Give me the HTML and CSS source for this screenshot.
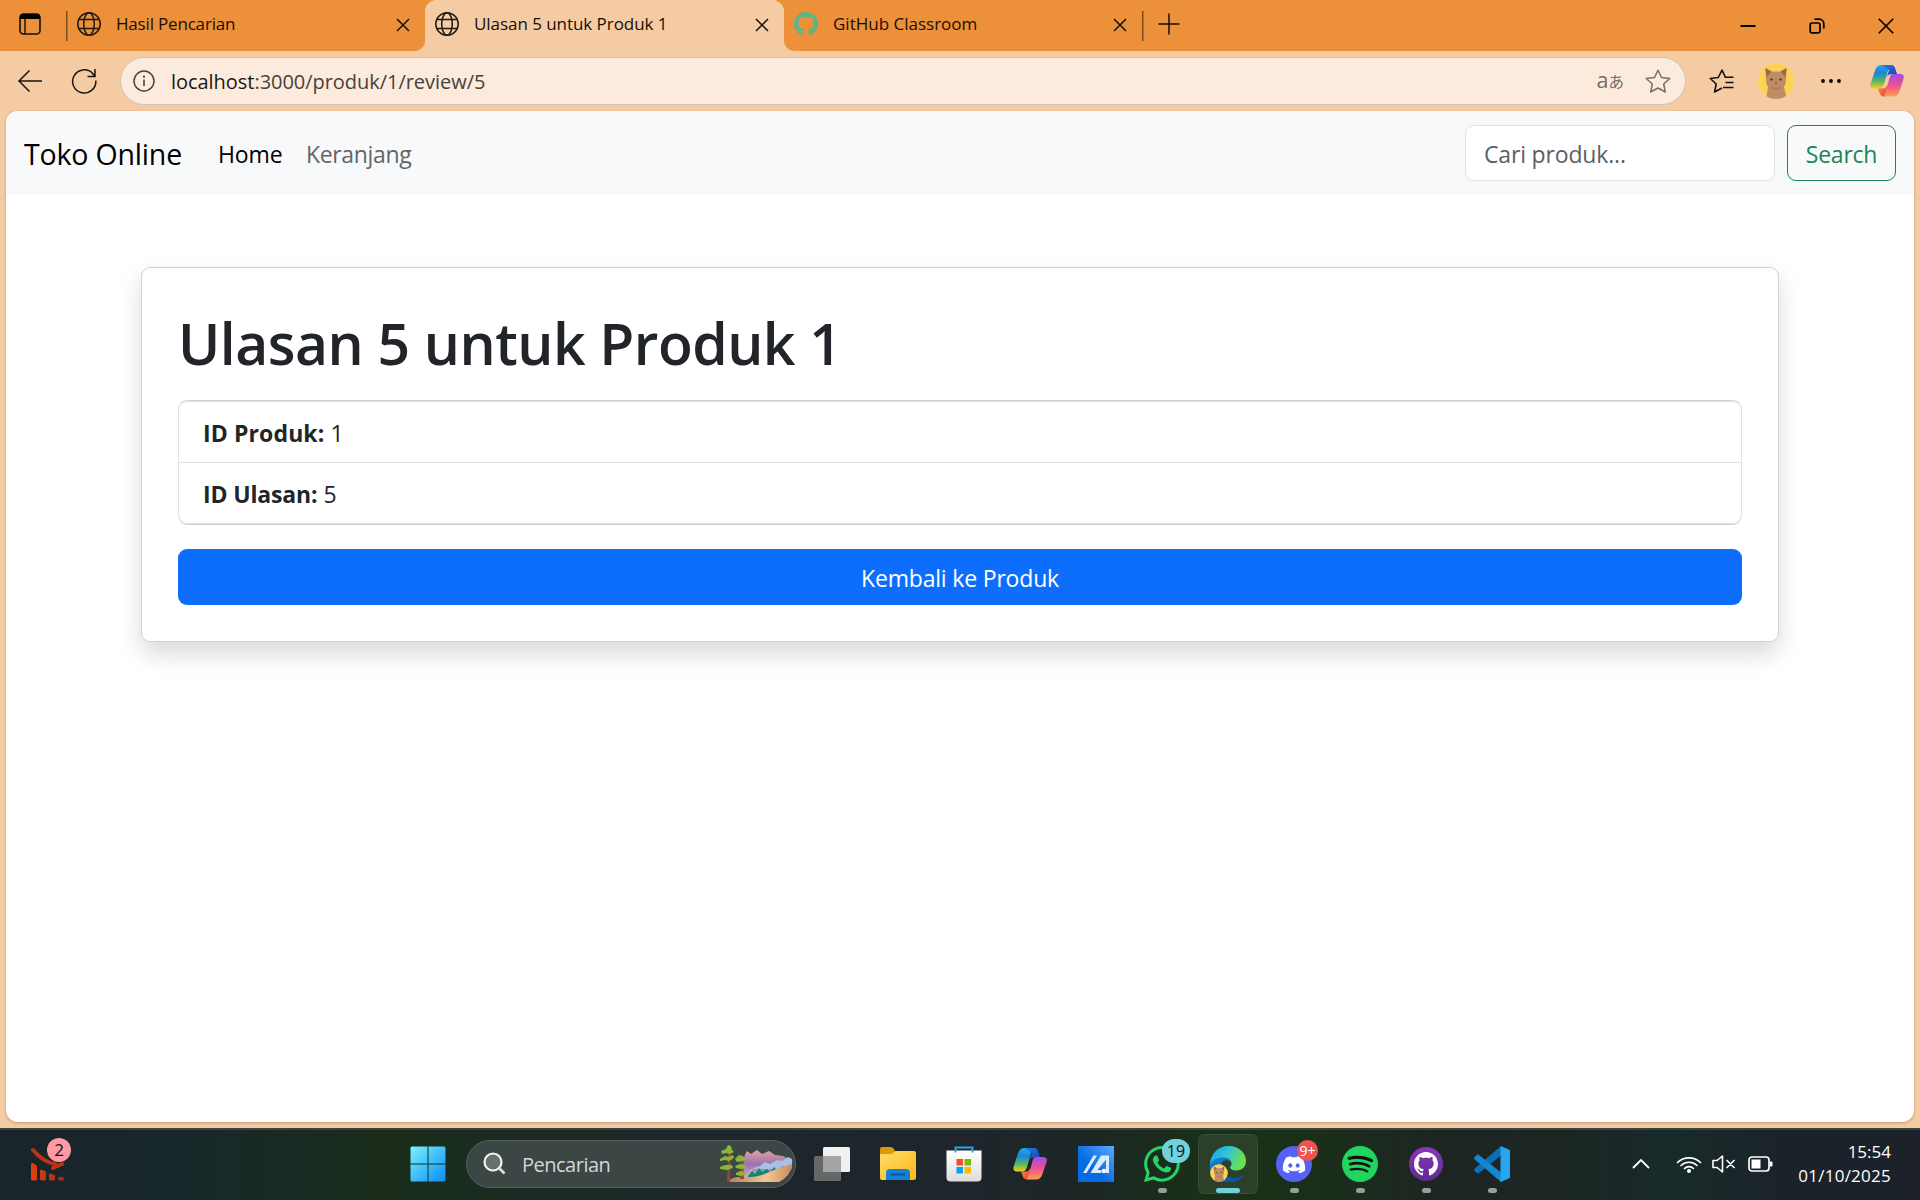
FILE: index.html
```
<!DOCTYPE html>
<html lang="id">
<head>
<meta charset="utf-8">
<title>Ulasan 5 untuk Produk 1</title>
<link rel="stylesheet" href="styles.css">
</head>
<body>
<svg class="defs" width="0" height="0" aria-hidden="true">
  <defs>
    <linearGradient id="cpA" x1="0" y1="0" x2="0" y2="1"><stop offset="0" stop-color="#1ba8f0"/><stop offset=".35" stop-color="#1b86d8"/><stop offset=".7" stop-color="#5cb860"/><stop offset="1" stop-color="#f5d014"/></linearGradient>
    <linearGradient id="cpB" x1="0" y1="0" x2="0" y2="1"><stop offset="0" stop-color="#a24bea"/><stop offset=".5" stop-color="#ee5090"/><stop offset="1" stop-color="#ff9f4e"/></linearGradient>
    <linearGradient id="cpC" x1="0" y1="0" x2="1" y2="1"><stop offset="0" stop-color="#1b7fe6"/><stop offset="1" stop-color="#1c3bb8"/></linearGradient>
    <linearGradient id="cpD" x1="0" y1="0" x2="1" y2="1"><stop offset="0" stop-color="#ff8a4a"/><stop offset="1" stop-color="#e8403a"/></linearGradient>
    <linearGradient id="winG" gradientUnits="userSpaceOnUse" x1="0" y1="0" x2="36" y2="36"><stop offset="0" stop-color="#7af3ff"/><stop offset=".5" stop-color="#3fc0fb"/><stop offset="1" stop-color="#0b8cf5"/></linearGradient>
    <linearGradient id="folder" x1="0" y1="0" x2="1" y2="1"><stop offset="0" stop-color="#ffdc6e"/><stop offset="1" stop-color="#fdb714"/></linearGradient>
    <linearGradient id="storeG" x1="0" y1="0" x2="0" y2="1"><stop offset="0" stop-color="#fff"/><stop offset="1" stop-color="#dcdcdc"/></linearGradient>
    <linearGradient id="asus" x1="1" y1="0" x2=".4" y2=".6"><stop offset="0" stop-color="#5fa8ff"/><stop offset="1" stop-color="#056be0"/></linearGradient>
    <linearGradient id="edgeA" x1="0" y1="0" x2="1" y2=".3"><stop offset="0" stop-color="#1b9de2"/><stop offset=".5" stop-color="#2fc4d8"/><stop offset="1" stop-color="#6be04e"/></linearGradient>
    <linearGradient id="edgeB" x1="0" y1="0" x2="1" y2="1"><stop offset="0" stop-color="#1487d8"/><stop offset="1" stop-color="#0b4a94"/></linearGradient>
    <linearGradient id="ghG" x1="0" y1="0" x2="0" y2="1"><stop offset="0" stop-color="#8b36b8"/><stop offset="1" stop-color="#5e2a90"/></linearGradient>
    <linearGradient id="redG" x1="0" y1="0" x2="1" y2="0"><stop offset="0" stop-color="#df410d"/><stop offset="1" stop-color="#a02a14"/></linearGradient>
    <linearGradient id="mtn" x1="0" y1="0" x2="0" y2="1"><stop offset="0" stop-color="#e2a5a0"/><stop offset=".5" stop-color="#9a72b0"/><stop offset="1" stop-color="#d9a8b8"/></linearGradient>
    <linearGradient id="sand" x1="0" y1="0" x2="1" y2="0"><stop offset="0" stop-color="#b87858"/><stop offset=".6" stop-color="#f0c896"/><stop offset="1" stop-color="#c88a60"/></linearGradient>
    <symbol id="globe" viewBox="0 0 24 24"><g fill="none" stroke="#201a14" stroke-width="1.5"><circle cx="12" cy="12" r="11.2"/><ellipse cx="12" cy="12" rx="5.3" ry="11.2"/><path d="M2 7.6h20M2 16.4h20"/></g></symbol>
    <symbol id="x" viewBox="0 0 14 14"><path d="M1 1l12 12M13 1L1 13" stroke="#111" stroke-width="1.5" fill="none"/></symbol>
    <symbol id="octocat" viewBox="0 0 16 16"><path d="M8 0C3.58 0 0 3.58 0 8c0 3.54 2.29 6.53 5.47 7.59.4.07.55-.17.55-.38 0-.19-.01-.82-.01-1.49-2.01.37-2.53-.49-2.69-.94-.09-.23-.48-.94-.82-1.13-.28-.15-.68-.52-.01-.53.63-.01 1.08.58 1.23.82.72 1.21 1.87.87 2.33.66.07-.52.28-.87.51-1.07-1.78-.2-3.64-.89-3.64-3.95 0-.87.31-1.59.82-2.15-.08-.2-.36-1.02.08-2.12 0 0 .67-.21 2.2.82.64-.18 1.32-.27 2-.27s1.36.09 2 .27c1.53-1.04 2.2-.82 2.2-.82.44 1.1.16 1.92.08 2.12.51.56.82 1.27.82 2.15 0 3.07-1.87 3.75-3.65 3.95.29.25.54.73.54 1.48 0 1.07-.01 1.93-.01 2.2 0 .21.15.46.55.38A8.01 8.01 0 0 0 16 8c0-4.42-3.58-8-8-8z"/></symbol>
    <clipPath id="disc"><circle cx="18" cy="18" r="18"/></clipPath>
    <symbol id="cat" viewBox="0 0 36 36"><g clip-path="url(#disc)"><circle cx="18" cy="18" r="18" fill="#fdd355"/><path d="M8 36l2-12q-2.500-4-2-8L7.500 5l6 3.500h9l6-3.500L28 16q.5 4-2 8l3 12z" fill="#be8d66"/><path d="M7.500 5l6 3.500-5 6zM28.500 5l-6 3.500 5 6z" fill="#9b6a4a"/><path d="M13 24.500q5 3 10 0" fill="none" stroke="#a87853"/><circle cx="13.500" cy="16.500" r="1.100" fill="#222"/><circle cx="22.500" cy="16.500" r="1.100" fill="#222"/><path d="M16.800 19.500h2.400L18 21z" fill="#4a2b1b"/></g></symbol>
    <symbol id="copilot" viewBox="0 0 34 32"><path d="M20 0h-8.500C8 0 6 2 5 5.500L.8 18C-.5 22 1 23.500 4 23.500h5c2.500 0 4-1.300 5-4.500l4-13.500C18.800 2 20 0 20 0z" fill="url(#cpA)"/><path d="M12 0h9c2.500 0 3.500 1 4.200 3.500L27 9h-5c-3 0-4.500 1-5.500 4L19 5z" fill="url(#cpC)"/><path d="M8 23.500h5c2 0 3.500-1.300 4.500-4L15.500 30c-.3 1-.5 1.500-1.500 1.500-2.500 0-3.700-1.200-4.300-3.500z" fill="url(#cpD)"/><path d="M14 31.500h9c3.500 0 5.500-2 6.500-5.500L33.500 14c1-3.500-.3-5-3.500-5h-7c-1.600 0-2.600 1-3.200 3L16 25.500c-1 3.500-2 6-2 6z" fill="url(#cpB)"/></symbol>
  </defs>
</svg>

<header class="tabstrip">
  <button class="tab-actions"><svg width="22" height="22" viewBox="0 0 22 22"><rect x="1" y="1" width="20" height="20" rx="3.500" fill="none" stroke="#111" stroke-width="1.600"/><path d="M1 6V4a3 3 0 0 1 3-3h14a3 3 0 0 1 3 3v2z" fill="#000"/><path d="M6 6v15" stroke="#111" stroke-width="1.400"/></svg></button>
  <span class="sep"></span>
  <div class="tab first"><svg class="fav"><use href="#globe"/></svg><span class="tab-title t1">Hasil Pencarian</span><svg class="close"><use href="#x"/></svg></div>
  <div class="tab active"><svg class="fav"><use href="#globe"/></svg><span class="tab-title t2">Ulasan 5 untuk Produk 1</span><svg class="close"><use href="#x"/></svg></div>
  <div class="tab last"><svg class="fav green"><use href="#octocat"/></svg><span class="tab-title">GitHub Classroom</span><svg class="close"><use href="#x"/></svg></div>
  <span class="sep end"></span>
  <svg class="plus" width="22" height="22" viewBox="0 0 22 22"><path d="M11 .5v21M.5 11h21" stroke="#111" stroke-width="1.500"/></svg>
  <div class="win-controls">
    <svg width="16" height="16" viewBox="0 0 16 16"><path d="M.5 8h15" stroke="#000" stroke-width="2"/></svg>
    <svg width="16" height="16" viewBox="0 0 16 16"><g fill="none" stroke="#000" stroke-width="1.700"><rect x="1.200" y="5" width="9.800" height="9.800" rx="1.800"/><path d="M5.500 1.200h4.700a4.600 4.600 0 0 1 4.600 4.600v4.700"/></g></svg>
    <svg width="16" height="16" viewBox="0 0 16 16"><path d="M.8.8l14.400 14.400M15.200.8L.8 15.200" stroke="#000" stroke-width="1.600"/></svg>
  </div>
</header>

<div class="toolbar">
  <svg class="back" width="26" height="24" viewBox="0 0 26 24"><path d="M25 12H2M12.500 1.500L2 12l10.500 10.500" fill="none" stroke="#1a1510" stroke-width="1.500"/></svg>
  <svg class="reload" width="26" height="26" viewBox="0 0 26 26"><path d="M24.800 12.500A11.600 11.600 0 1 1 21.500 5.300L24 8.500M24 1v7.500h-7.500" fill="none" stroke="#1a1510" stroke-width="1.500"/></svg>
  <div class="address">
    <svg width="22" height="22" viewBox="0 0 22 22"><circle cx="11" cy="11" r="10" fill="none" stroke="#4a443e" stroke-width="1.500"/><path d="M11 9.500v6.500" stroke="#4a443e" stroke-width="1.600"/><circle cx="11" cy="6.700" r="1.100" fill="#4a443e"/></svg>
    <span class="url"><b>localhost</b>:3000/produk/1/review/5</span>
    <span class="translate"><i>a</i>あ</span>
    <svg class="star" width="26" height="24" viewBox="0 0 26 24"><path d="M13 1.200l3.500 7.300 8.300 1-6.100 5.500 1.600 8-7.300-4-7.300 4 1.600-8-6.100-5.500 8.300-1z" fill="none" stroke="#77706a" stroke-width="1.500" stroke-linejoin="round"/></svg>
  </div>
  <svg class="favs" width="26" height="24" viewBox="0 0 26 24"><path d="M16.500 8.500L13 1.200 9.300 8.500l-8 1 5.900 5.500-1.600 8L13 19M15.500 8.300H24.500M16.500 13.500H24.500M14 18.500H24.500" fill="none" stroke="#111" stroke-width="1.600" stroke-linejoin="round"/></svg>
  <svg class="avatar" width="36" height="36"><use href="#cat"/></svg>
  <svg class="dots" width="20" height="4" viewBox="0 0 20 4"><circle cx="2" cy="2" r="1.900"/><circle cx="10" cy="2" r="1.900"/><circle cx="18" cy="2" r="1.900"/></svg>
  <svg class="cop" width="34" height="32"><use href="#copilot"/></svg>
</div>

<main class="page">
  <nav class="navbar">
    <span class="brand">Toko Online</span>
    <span class="nav-link on">Home</span>
    <span class="nav-link kr">Keranjang</span>
    <div class="search-input"><span>Cari produk...</span></div>
    <div class="search-btn"><span>Search</span></div>
  </nav>
  <section class="card">
    <h1>Ulasan 5 untuk Produk 1</h1>
    <ul class="list">
      <li><strong class="product">ID Produk:</strong> 1</li>
      <li><strong class="review">ID Ulasan:</strong> 5</li>
    </ul>
    <a class="btn-primary">Kembali ke Produk</a>
  </section>
</main>

<footer class="taskbar">
  <div class="widget">
    <svg width="34" height="34" viewBox="0 0 34 34"><g fill="url(#redG)"><path d="M0 17.500q0-1.800 1.500-1.500l3.500 2q1 .6 1 1.700V32q0 1.500-1.500 1.500h-3Q0 33.500 0 32zM9 24q0-1.600 1.500-1.300l3 1q1.500.5 1.500 1.800V32q0 1.500-1.500 1.500h-3Q9 33.500 9 32zM18 28q0-1.500 1.500-1.300l3 .8q1.500.5 1.500 1.700V32q0 1.500-1.500 1.500h-3Q18 33.500 18 32zM27 31.500q0-2 2-1.700l3 .6q1.500.4 1.500 1.600 0 1.500-1.500 1.500h-3.500Q27 33.500 27 31.500z"/></g><path d="M2 3q10 12 22 14M22 21l9-4" fill="none" stroke="#bb3312" stroke-width="4" stroke-linecap="round"/></svg>
    <span class="badge pink">2</span>
  </div>
  <div class="apps">
    <div class="app"><svg width="36" height="36" viewBox="0 0 36 36"><path d="M.5 2q0-1.500 1.500-1.500h15.500v17H.5zM18.500.5H34q1.500 0 1.500 1.500v15.500h-17zM.5 18.500h17v17H2q-1.500 0-1.500-1.500zM18.500 18.500h17V34q0 1.500-1.500 1.500H18.500z" fill="url(#winG)"/></svg></div>
    <div class="tsearch">
      <svg width="24" height="24" viewBox="0 0 24 24"><circle cx="10" cy="10" r="8.500" fill="#66716f" stroke="#f2f2f2" stroke-width="2.200"/><path d="M16 16l5.500 5.500" stroke="#ddd" stroke-width="2.600"/></svg>
      <span>Pencarian</span>
      <svg class="scene" width="74" height="40" viewBox="0 0 74 40"><path d="M24 24q0-12 4-17l4 3 6-4 5 4 7-3 6 4 8 1 7 4q4 4 1 10l-10 8H24z" fill="url(#mtn)"/><path d="M27 32l8-8 6-2 5-4 5 2 7-4 5 1 6-4 4 2q1 6-2 10H32z" fill="#a9bfe4"/><path d="M29 32l4-5 3 3 4-6 3 4 5-3 3 3 4-5 3 3 6-4 3 2v6l-14 5H30z" fill="#0f8a70"/><path d="M8 38q4-5 14-5 16 1 26-4 12-6 25-9-1 12-13 18z" fill="url(#sand)"/><path d="M9 6h3l-1 32H8zM21 13h3l1 22h-4z" fill="#8a4a38"/><path d="M2 7l5-2 2-4 3 1 1 4 2 2-4 2-4-1-4 1zM1 15l5-3 3 1 5-2 1 3-5 3-4-1-5 1zM1 23l5-2 7 0 1 3-6 2-7-1zM16 15l4-4 4 1 3 4-4 1-5 1zM16 22l5-2 6 1 0 3-5 1-5-1zM17 29l4-2 6 1-1 3-4 1-5-1z" fill="#86b93a"/></svg>
    </div>
    <div class="app"><svg width="36" height="34" viewBox="0 0 36 34"><rect x="9" y="0" width="27" height="25" rx="1.500" fill="#f0f0f0"/><rect y="9" width="27" height="25" rx="1.500" fill="#6a6a6a" opacity=".95"/><rect x="9" y="9" width="18" height="16" fill="#a5a5a5"/></svg></div>
    <div class="app"><svg width="36" height="34" viewBox="0 0 36 34"><path d="M0 2q0-2 2-2h9q1.500 0 2.500 1.500L15 4v6H0z" fill="#dc9a07"/><path d="M0 7h11q1.500 0 2.500-1.500T16 4h18q2 0 2 2v25q0 2-2 2H2q-2 0-2-2z" fill="url(#folder)"/><path d="M6 33v-7q0-4 4-4h16q4 0 4 4v7z" fill="#1382d2"/><path d="M11 27.500h14" stroke="#0b519c" stroke-width="2"/></svg></div>
    <div class="app"><svg width="36" height="36" viewBox="0 0 36 36"><path d="M.5 4.500h35v27q0 4-4 4h-27q-4 0-4-4z" fill="url(#storeG)"/><path d="M9.500 6.500v-5h17v5" fill="none" stroke="#2aa6e8" stroke-width="2"/><path d="M10.500 13H17v6.500h-6.500z" fill="#f25022"/><path d="M18.500 13H25v6.500h-6.500z" fill="#7fba00"/><path d="M10.500 21H17v6.500h-6.500z" fill="#00a4ef"/><path d="M18.500 21H25v6.500h-6.500z" fill="#ffb900"/></svg></div>
    <div class="app"><svg width="34" height="32"><use href="#copilot"/></svg></div>
    <div class="app"><svg width="36" height="36" viewBox="0 0 36 36"><path d="M0 0h36v36H0z" fill="url(#asus)"/><path d="M5 27L15.500 9.500H19L8.500 27zM12.500 27L23 9.500h8V27h-3V13.500L19.500 24h4v3z" fill="#d9ecff"/><circle cx="26" cy="25" r="2.200" fill="#fff"/></svg></div>
    <div class="app run"><svg width="36" height="36" viewBox="0 0 16 16" fill="#25d366"><path d="M13.601 2.326A7.854 7.854 0 0 0 7.994 0C3.627 0 .068 3.558.064 7.926c0 1.399.366 2.760 1.057 3.965L0 16l4.204-1.102a7.933 7.933 0 0 0 3.790.965h.004c4.368 0 7.926-3.558 7.930-7.930A7.898 7.898 0 0 0 13.600 2.326zM7.994 14.521a6.573 6.573 0 0 1-3.356-.92l-.24-.144-2.494.654.666-2.433-.156-.251a6.560 6.560 0 0 1-1.007-3.505c0-3.626 2.957-6.584 6.591-6.584a6.560 6.560 0 0 1 4.660 1.931 6.557 6.557 0 0 1 1.928 4.660c-.004 3.639-2.961 6.592-6.592 6.592z"/><path d="M11.603 9.581c-.197-.099-1.170-.578-1.353-.646-.182-.065-.315-.099-.445.099-.133.197-.513.646-.627.775-.114.133-.232.148-.43.05-.197-.1-.836-.308-1.592-.985-.59-.525-.985-1.175-1.103-1.372-.114-.198-.011-.304.088-.403.087-.088.197-.232.296-.346.1-.114.133-.198.198-.33.065-.134.034-.248-.015-.347-.05-.099-.445-1.076-.612-1.470-.16-.389-.323-.335-.445-.34-.114-.007-.247-.007-.38-.007a.729.729 0 0 0-.529.247c-.182.198-.691.677-.691 1.654 0 .977.71 1.916.81 2.049.098.133 1.394 2.132 3.383 2.992.47.205.84.326 1.129.418.475.152.904.129 1.246.08.38-.058 1.171-.48 1.338-.943.164-.464.164-.86.114-.943-.049-.084-.182-.133-.38-.232z"/></svg><span class="badge cyan">19</span></div>
    <div class="app run current"><svg width="36" height="36" viewBox="0 0 36 36"><path d="M0 19C0 8 8 0 18.500 0 29 0 36 7 36 15c0 6-4.500 9.500-9.500 9.500-4 0-6.500-1.500-6.500-3 0-1 1.500-1.500 1.500-4 0-3-3-5.500-7-5.500C7 12 0 16 0 24z" fill="url(#edgeA)"/><path d="M0 21C.5 14 7 11.500 12.500 11.500c5 0 9 2.500 9 6-1-2-3-3.200-5.500-3.200-3.500 0-5 3.200-5 6.700 0 7 7 11 13 11 3.500 0 6-1 8.500-2.500 1-.5 1.500.2 1 1C31 34 25 36 19 36 8 36-.5 31 0 21z" fill="url(#edgeB)"/><svg x="0" y="18" width="18" height="18"><use href="#cat"/></svg></svg></div>
    <div class="app run"><svg width="36" height="36" viewBox="0 0 36 36"><circle cx="18" cy="18" r="18" fill="#5562f5"/><path transform="translate(6.800 7.500) scale(1.400)" d="M13.545 2.907a13.227 13.227 0 0 0-3.257-1.011.05.05 0 0 0-.052.025c-.141.25-.297.577-.406.833a12.190 12.190 0 0 0-3.658 0 8.258 8.258 0 0 0-.412-.833.051.051 0 0 0-.052-.025c-1.125.194-2.220.534-3.257 1.011a.041.041 0 0 0-.021.018C.356 6.024-.213 9.047.066 12.032c.001.014.01.028.021.037a13.276 13.276 0 0 0 3.995 2.020.05.05 0 0 0 .056-.019c.308-.42.582-.863.818-1.329a.05.05 0 0 0-.01-.059.051.051 0 0 0-.018-.011 8.875 8.875 0 0 1-1.248-.595.05.05 0 0 1-.02-.066.051.051 0 0 1 .015-.019c.084-.063.168-.129.248-.195a.05.05 0 0 1 .051-.007c2.619 1.196 5.454 1.196 8.041 0a.052.052 0 0 1 .053.007c.08.066.164.132.248.195a.051.051 0 0 1-.004.085 8.254 8.254 0 0 1-1.249.594.05.05 0 0 0-.03.03.052.052 0 0 0 .003.041c.24.465.515.909.817 1.329a.05.05 0 0 0 .056.019 13.235 13.235 0 0 0 4.001-2.020.049.049 0 0 0 .021-.037c.334-3.451-.559-6.449-2.366-9.106a.034.034 0 0 0-.02-.019Zm-8.198 7.307c-.789 0-1.438-.724-1.438-1.612 0-.889.637-1.613 1.438-1.613.807 0 1.450.73 1.438 1.613 0 .888-.637 1.612-1.438 1.612Zm5.316 0c-.788 0-1.438-.724-1.438-1.612 0-.889.637-1.613 1.438-1.613.807 0 1.451.73 1.438 1.613 0 .888-.631 1.612-1.438 1.612Z" fill="#fff"/></svg><span class="badge red">9+</span></div>
    <div class="app run"><svg width="36" height="36" viewBox="0 0 24 24"><circle cx="12" cy="12" r="11" fill="#101510"/><path fill="#1fd760" d="M12 0C5.400 0 0 5.400 0 12s5.400 12 12 12 12-5.400 12-12S18.660 0 12 0zm5.521 17.340c-.24.359-.66.48-1.021.24-2.820-1.740-6.360-2.101-10.561-1.141-.418.122-.779-.179-.899-.539-.12-.421.18-.78.54-.9 4.560-1.021 8.520-.6 11.640 1.320.42.18.479.659.301 1.020zm1.440-3.300c-.301.42-.841.6-1.262.3-3.239-1.980-8.159-2.580-11.939-1.380-.479.12-1.020-.12-1.140-.6-.12-.48.12-1.021.6-1.141C9.600 9.900 15 10.561 18.720 12.840c.361.181.54.78.241 1.200zm.12-3.360C15.240 8.400 8.820 8.160 5.160 9.301c-.6.179-1.200-.181-1.380-.721-.18-.601.18-1.200.72-1.381 4.260-1.260 11.280-1.020 15.721 1.621.539.3.719 1.020.419 1.560-.299.421-1.020.599-1.559.3z"/></svg></div>
    <div class="app run"><svg width="34" height="34" viewBox="0 0 34 34"><circle cx="17" cy="17" r="17" fill="url(#ghG)"/><svg x="5" y="5" width="24" height="24" fill="#fff"><use href="#octocat"/></svg></svg></div>
    <div class="app run"><svg width="36" height="36" viewBox="0 0 36 36"><path d="M27 0v9.500L5 27q-1 .8-2 0l-2.500-2.300q-1-1 0-2z" fill="#0a6fb8"/><path d="M27 36v-9.500L5 9q-1-.8-2 0L.5 11.300q-1 1 0 2z" fill="#1487cf"/><path d="M26.500 0L36 4v28l-9.500 4z" fill="#28a5f2"/></svg></div>
  </div>
  <div class="tray">
    <svg class="chev" width="18" height="10" viewBox="0 0 18 10"><path d="M1 9l8-8 8 8" fill="none" stroke="#fff" stroke-width="1.800"/></svg>
    <svg class="wifi" width="26" height="18" viewBox="0 0 26 18"><g fill="none" stroke="#fff" stroke-width="1.700" stroke-linecap="round"><path d="M1.500 7.500a16.500 16.500 0 0 1 23 0M5 10.500a11.500 11.500 0 0 1 16 0M8.500 13.500a6.500 6.500 0 0 1 9 0"/></g><circle cx="13" cy="16" r="2" fill="#fff"/></svg>
    <svg class="spk" width="24" height="18" viewBox="0 0 24 18"><path d="M1 5.500h4L10.500 1v16L5 12.500H1zM14.500 5l8 8M22.500 5l-8 8" fill="none" stroke="#fff" stroke-width="1.600" stroke-linejoin="round"/></svg>
    <svg class="bat" width="25" height="16" viewBox="0 0 25 16"><rect x="1" y="1" width="20" height="14" rx="3" fill="none" stroke="#fff" stroke-width="1.700"/><rect x="3.500" y="3.500" width="9" height="9" fill="#fff"/><path d="M22 5.500h1.500q1 0 1 1v3q0 1-1 1H22z" fill="#fff"/></svg>
    <div class="clock"><span class="time">15:54</span><span class="date">01/10/2025</span></div>
  </div>
</footer>
</body>
</html>
```
FILE: styles.css
```
* { box-sizing: border-box; }
html, body { margin: 0; height: 100%; }
body {
  display: flex;
  flex-direction: column;
  height: 1200px;
  overflow: hidden;
  background: #f5cba4;
  font-family: "Open Sans", "Noto Sans", sans-serif;
  color: #212529;
}
svg { display: block; flex: none; }
.defs { position: absolute; }
span { white-space: nowrap; }

/* Tab strip */
.tabstrip { display: flex; align-items: center; height: 51px; flex: none; background: #f5cba4; }
.tab-actions { width: 66px; height: 51px; padding: 0 0 3px 19px; border: 0; background: #ec9039; display: flex; align-items: center; }
.sep { width: 11px; height: 51px; background: linear-gradient(#7d4c1e, #7d4c1e) 0 11px / 1.500px 30px no-repeat #ec9039; }
.tab { display: flex; align-items: center; height: 51px; padding: 0 14px 3px 10px; background: #ec9039; }
.tab.first { width: 348px; padding-left: 0; padding-right: 15px; border-bottom-right-radius: 10px; }
.tab.active { width: 359px; padding-right: 15px; background: linear-gradient(#f5cba4, #f5cba4); border-radius: 12px 12px 0 0; box-shadow: 0 -12px 0 #ec9039; }
.tab.last { width: 358px; padding-left: 10px; padding-right: 15px; border-bottom-left-radius: 10px; }
.fav { width: 24px; height: 24px; margin-right: 15px; }
.green { fill: #5cb585; }
.tab-title { flex: 1; font-size: 17px; line-height: 24px; color: #1a0f05; }
.t1 { letter-spacing: -.18px; }
.t2 { letter-spacing: -.05px; }
.close { width: 14px; height: 14px; margin-top: 2px; }
.sep.end { width: 16px; }
.plus { box-sizing: content-box; padding: 13px 0 16px; background: #ec9039; }
.win-controls { flex: 1; height: 51px; display: flex; justify-content: flex-end; align-items: center; gap: 53px; padding-right: 26px; background: #ec9039; }

/* Address row */
.toolbar { display: flex; align-items: center; height: 60px; flex: none; padding-left: 17px; }
.back { margin-right: 28px; }
.reload { margin-right: 23px; }
.address { display: flex; align-items: center; width: 1566px; height: 48px; padding: 0 14px 0 12px; border: 1.500px solid #cfc4b8; border-radius: 24px; background: #fcebdd; }
.url { flex: 1; margin-left: 16px; padding-top: 1px; font-size: 20px; line-height: 28px; letter-spacing: -.04px; color: #47413c; }
.url b { font-weight: 400; color: #1b1713; }
.translate { font: 15.500px/24px "Noto Sans CJK JP", sans-serif; color: #746d67; margin-right: 21px; padding-bottom: 2px; }
.translate i { font: 21.500px/24px "Open Sans", sans-serif; }
.favs { margin-left: 23px; }
.avatar { margin-left: 23px; }
.dots { margin-left: 27px; }
.cop { margin-left: 29px; }

/* Page */
.page { flex: none; height: 1011px; margin: 0 6px 6px; background: #fff; border-radius: 12px; overflow: hidden; box-shadow: 0 1px 3px rgba(110, 60, 10, .35); }
.navbar { display: flex; align-items: center; height: 84px; padding: 2px 18px 0; background: #f8f9fb; font-size: 23px; line-height: 36px; }
.brand { width: 194px; font-size: 28.500px; letter-spacing: -.17px; color: #000; }
.nav-link { width: 89px; color: #000; letter-spacing: -.1px; }
.nav-link.kr { position: relative; left: -1px; letter-spacing: -.35px; color: #626567; }
.search-input { width: 310px; height: 56px; margin: -2px 12px 0 auto; padding: 10px 18px; border: 1px solid #dee2e6; border-radius: 9px; background: #fff; color: #5b6067; letter-spacing: -.17px; }
.search-btn { width: 109px; height: 56px; margin-top: -2px; padding: 10px 0; text-align: center; border: 1px solid #198754; border-radius: 9px; color: #198754; letter-spacing: -.25px; }

.card { width: 1638px; height: 375px; margin: 72px auto 0; padding: 36px; border: 1px solid #d2d2d3; border-radius: 9px; background: #fff; box-shadow: 0 12px 24px rgba(0, 0, 0, .15); }
h1 { margin: 0 0 24px; height: 72px; padding-top: 3px; font-size: 57px; line-height: 72px; font-weight: 600; letter-spacing: -.52px; color: #212529; }
.list { margin: 0 0 24px; padding: 0; list-style: none; height: 125px; border: 1px solid #dee2e6; border-top-color: #d0d1d2; border-bottom-color: #d0d1d2; border-radius: 9px; box-shadow: inset 0 1px #e0e2e4, inset 0 -1px #e0e2e4; font-size: 23px; line-height: 36px; }
.list li { height: 62px; padding: 13px 24px 12px; }
.list li:first-child { padding-top: 14px; border-bottom: 1px solid #dee2e6; }
.product { letter-spacing: .12px; }
.review { letter-spacing: -.15px; }
.btn-primary { display: block; height: 56px; padding-top: 11px; border-radius: 9px; background: #0d6efd; color: #fff; text-align: center; font-size: 23px; line-height: 36px; letter-spacing: -.18px; }

/* Taskbar */
.taskbar { display: grid; grid-template-columns: 398px auto 1fr; align-items: center; height: 72px; flex: none; padding-bottom: 2px; border-top: 2px solid #39443f; color: #fff;
  background: linear-gradient(90deg, #19242b 0, #182829 10%, #192b20 17%, #1a2d19 20%, #1a2c1f 24%, #1d272a 36%, #1e252c 50%, #1c2724 57%, #193017 63%, #1a2f18 68%, #1d2523 75%, #1b2623 81%, #182a2a 87%, #1b2329 93%, #1c2129 100%); }
.widget { position: relative; padding-left: 31px; }
.badge { position: absolute; display: grid; place-items: center; height: 24px; border-radius: 12px; color: #111; font-size: 17px; line-height: 20px; }
.pink { width: 24px; left: 47px; top: -9px; background: #ff99a4; }
.cyan { width: 28px; left: 30px; top: 5px; background: #6fd3d9; font-size: 16px; }
.red { width: 21px; height: 21px; left: 33px; top: 6px; background: #ef5350; color: #fff; font-size: 14px; }
.apps { display: flex; align-items: center; gap: 6px; }
.app { position: relative; width: 60px; height: 60px; display: grid; place-items: center; border-radius: 6px; }
.run::after { content: ""; position: absolute; left: 26px; bottom: 1px; width: 9px; height: 5px; border-radius: 3px; background: #979f98; }
.current { background: rgba(255, 255, 255, .08); box-shadow: inset 0 0 0 1px rgba(255, 255, 255, .07); }
.current::after { left: 18px; width: 24px; background: #6fd3d9; }
.tsearch { display: flex; align-items: center; width: 330px; height: 48px; margin-left: 2px; padding: 0 2px 0 16px; border: 1.500px solid #56605e; border-radius: 24px; background: #3b4645; overflow: hidden; }
.tsearch span { flex: 1; margin-left: 15px; padding-top: 1px; font-size: 20px; line-height: 28px; letter-spacing: -.5px; color: #d3d6d6; }
.tray { display: flex; align-items: center; justify-content: flex-end; padding-right: 29px; }
.wifi { margin-left: 26px; }
.spk { margin-left: 10px; }
.bat { margin-left: 12px; }
.clock { width: 118px; display: flex; flex-direction: column; align-items: flex-end; font-size: 17px; line-height: 24px; }
.date { letter-spacing: .25px; }
```
